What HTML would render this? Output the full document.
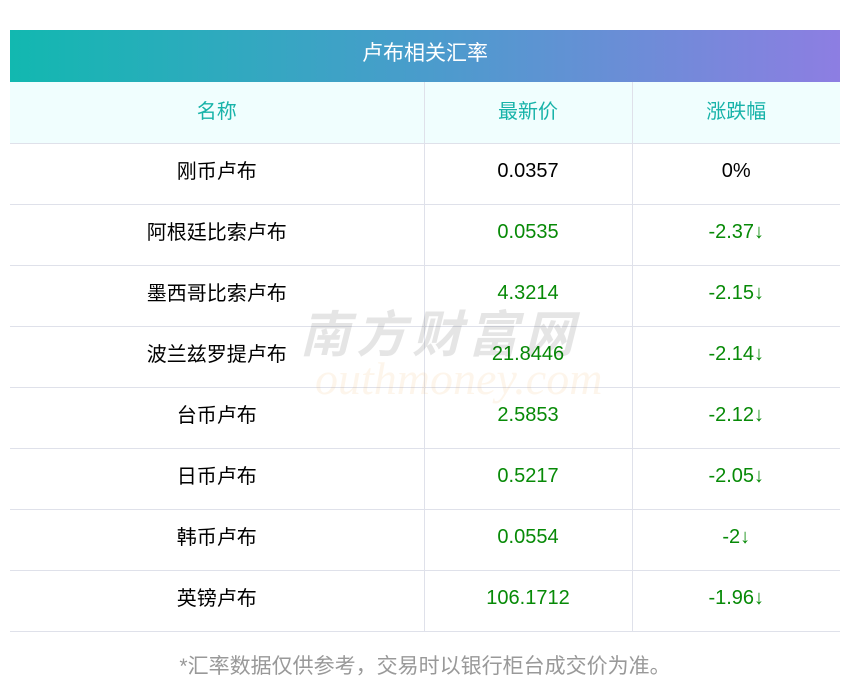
<!DOCTYPE html>
<html><head><meta charset="utf-8"><style>
body{margin:0;width:850px;height:697px;background:#fff;font-family:"Liberation Sans","Noto Sans CJK SC",sans-serif;position:relative;overflow:hidden}
.title{position:absolute;left:10px;top:30px;width:830px;height:52px;background:linear-gradient(90deg,#12b8b0,#4a9ccc 50%,#8d7ee2);color:#fff;font-size:21px;line-height:47px;text-align:center}
table{position:absolute;left:10px;top:82px;width:830px;border-collapse:collapse;table-layout:fixed}
td,th{height:61px;border-bottom:1px solid #dfe1ea;border-left:1px solid #dfe1ea;text-align:center;font-size:20px;font-weight:normal;padding:0 0 4px 0;box-sizing:border-box}
td:first-child,th:first-child{border-left:none}
th{background:#f0fefe;color:#17b3a9;padding-bottom:6px}
.g{color:#078a07}
.n{padding-bottom:8px}
.wm{position:absolute;left:300px;top:295px;font-size:50px;color:rgba(0,0,0,0.10);font-style:italic;letter-spacing:6px;font-weight:bold}
.wm2{position:absolute;left:315px;top:352px;font-size:46px;color:rgba(240,170,90,0.12);font-style:italic;font-family:"Liberation Serif",serif}
.foot{position:absolute;left:0;width:850px;top:650px;text-align:center;color:#999;font-size:21px}
</style></head><body>
<div class="title">卢布相关汇率</div>
<table>
<colgroup><col style="width:414px"><col style="width:208px"><col style="width:208px"></colgroup>
<tr><th>名称</th><th>最新价</th><th>涨跌幅</th></tr>
<tr><td class="n">刚币卢布</td><td>0.0357</td><td>0%</td></tr>
<tr><td class="n">阿根廷比索卢布</td><td class="g">0.0535</td><td class="g">-2.37↓</td></tr>
<tr><td class="n">墨西哥比索卢布</td><td class="g">4.3214</td><td class="g">-2.15↓</td></tr>
<tr><td class="n">波兰兹罗提卢布</td><td class="g">21.8446</td><td class="g">-2.14↓</td></tr>
<tr><td class="n">台币卢布</td><td class="g">2.5853</td><td class="g">-2.12↓</td></tr>
<tr><td class="n">日币卢布</td><td class="g">0.5217</td><td class="g">-2.05↓</td></tr>
<tr><td class="n">韩币卢布</td><td class="g">0.0554</td><td class="g">-2↓</td></tr>
<tr><td class="n">英镑卢布</td><td class="g">106.1712</td><td class="g">-1.96↓</td></tr>
</table>
<div class="wm">南方财富网</div>
<div class="wm2">outhmoney.com</div>
<div class="foot">*汇率数据仅供参考，交易时以银行柜台成交价为准。</div>
</body></html>
